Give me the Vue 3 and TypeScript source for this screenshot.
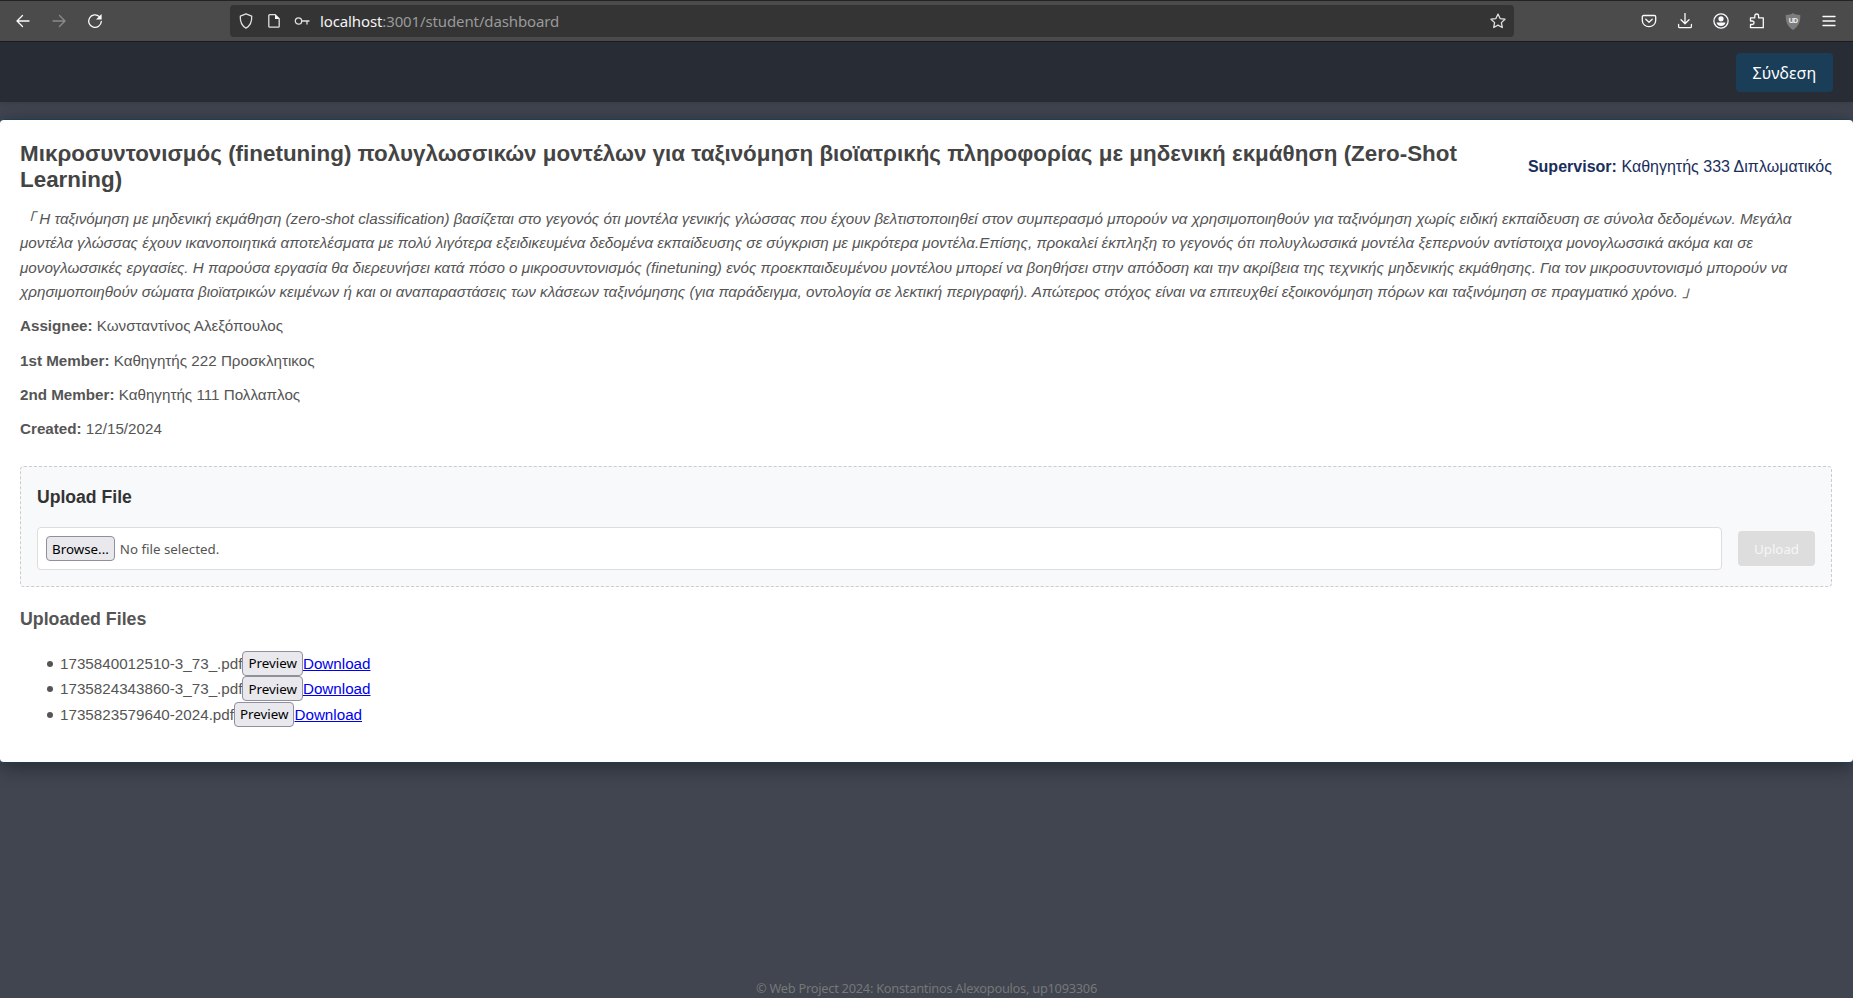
<script setup lang="ts">
interface Meta {
  label: string
  value: string
}

const meta: Meta[] = [
  { label: 'Assignee:', value: 'Κωνσταντίνος Αλεξόπουλος' },
  { label: '1st Member:', value: 'Καθηγητής 222 Προσκλητικος' },
  { label: '2nd Member:', value: 'Καθηγητής 111 Πολλαπλος' },
  { label: 'Created:', value: '12/15/2024' },
]

const files: string[] = [
  '1735840012510-3_73_.pdf',
  '1735824343860-3_73_.pdf',
  '1735823579640-2024.pdf',
]

const description: string[] = [
  'Η ταξινόμηση με μηδενική εκμάθηση (zero-shot classification) βασίζεται στο γεγονός ότι μοντέλα γενικής γλώσσας που έχουν βελτιστοποιηθεί στον συμπερασμό μπορούν να χρησιμοποιηθούν για ταξινόμηση χωρίς ειδική εκπαίδευση σε σύνολα δεδομένων. Μεγάλα',
  'μοντέλα γλώσσας έχουν ικανοποιητικά αποτελέσματα με πολύ λιγότερα εξειδικευμένα δεδομένα εκπαίδευσης σε σύγκριση με μικρότερα μοντέλα.Επίσης, προκαλεί έκπληξη το γεγονός ότι πολυγλωσσικά μοντέλα ξεπερνούν αντίστοιχα μονογλωσσικά ακόμα και σε',
  'μονογλωσσικές εργασίες. Η παρούσα εργασία θα διερευνήσει κατά πόσο ο μικροσυντονισμός (finetuning) ενός προεκπαιδευμένου μοντέλου μπορεί να βοηθήσει στην απόδοση και την ακρίβεια της τεχνικής μηδενικής εκμάθησης. Για τον μικροσυντονισμό μπορούν να',
  'χρησιμοποιηθούν σώματα βιοϊατρικών κειμένων ή και οι αναπαραστάσεις των κλάσεων ταξινόμησης (για παράδειγμα, οντολογία σε λεκτική περιγραφή). Απώτερος στόχος είναι να επιτευχθεί εξοικονόμηση πόρων και ταξινόμηση σε πραγματικό χρόνο.',
]
</script>

<template>
  <div class="window">
    <div class="toolbar">
      <div class="nav-icons">
        <svg class="icon" viewBox="0 0 16 16"><path d="M14 8H2.500M7.500 2.500L2 8l5.500 5.500" /></svg>
        <svg class="icon dim" viewBox="0 0 16 16"><path d="M2 8h11.500M8.500 2.500L14 8l-5.500 5.500" /></svg>
        <svg class="icon" viewBox="0 0 16 16">
          <path d="M14.300 8.500a6.300 6.300 0 1 1-2-5L13.500 5" />
          <path class="solid" d="M14.600 .9v5.600H9z" />
        </svg>
      </div>
      <div class="address">
        <svg class="icon soft" viewBox="0 0 16 16"><path d="M8 .9l5.700 2.300c.3 5-1.200 9.300-5.700 11.900C3.500 12.500 2 8.200 2.300 3.200z" /></svg>
        <svg class="icon soft" viewBox="0 0 16 16">
          <path d="M3.800 1.700h5.400l4 4v7.500a1 1 0 0 1-1 1H3.800a1 1 0 0 1-1-1V2.700a1 1 0 0 1 1-1z" />
          <path class="solid" d="M9 1.500v4.500h4.500z" />
        </svg>
        <svg class="icon soft" viewBox="0 0 16 16">
          <circle cx="4.500" cy="8" r="3.200" />
          <path d="M7.700 8H15M13 8v3" />
        </svg>
        <span class="url"><b>localhost</b>:3001/student/dashboard</span>
        <svg class="icon star soft" viewBox="0 0 16 16"><path d="M8 1.100l2.100 4.500 4.900.6-3.600 3.400.9 4.900L8 12.100l-4.300 2.400.9-4.900L1 6.200l4.900-.6z" /></svg>
      </div>
      <div class="tools">
        <svg class="icon" viewBox="0 0 16 16">
          <path d="M2.600 2.500h10.800c.8 0 1.300.5 1.300 1.300V7.500a6.700 6.200 0 0 1-13.400 0V3.800c0-.8.500-1.300 1.300-1.300z" />
          <path d="M4.800 6.300L8 9.300l3.200-3" />
        </svg>
        <svg class="icon" viewBox="0 0 16 16"><path d="M8 .5v10M4 6.800l4 4 4-4M1.600 11.500v2c0 .7.500 1.200 1.200 1.200h10.400c.7 0 1.200-.5 1.200-1.200v-2" /></svg>
        <svg class="icon" viewBox="0 0 16 16">
          <circle cx="8" cy="8" r="7.100" />
          <circle class="solid" cx="8" cy="5.800" r="2.600" />
          <path class="solid" d="M3.500 9.500h9c-.5 2.500-2.500 3.500-4.500 3.500s-4-1-4.500-3.500z" />
        </svg>
        <svg class="icon" viewBox="0 0 16 16"><path d="M1.500 14.700V11.500h1.800a1.700 1.700 0 0 0 0-3.500H1.500V4.800h4.300V2.900a1.900 1.900 0 0 1 3.800 0v1.900h4.700v9.900z" /></svg>
        <span class="shield">
          <svg viewBox="0 0 16 18"><path d="M8 0c2 1.500 4 2 7.700 2.200.3 6.500-1.500 12-7.700 15.800C1.800 14.200 0 8.700.3 2.200 4 2 6 1.500 8 0z" /></svg>
          <span>UD</span>
        </span>
        <svg class="icon" viewBox="0 0 16 16"><path d="M2 3.500h12M2 8h12M2 12.500h12" /></svg>
      </div>
    </div>

    <header class="header">
      <button class="login">Σύνδεση</button>
    </header>

    <main class="card">
      <div class="card-head">
        <h2>Μικροσυντονισμός (finetuning) πολυγλωσσικών μοντέλων για ταξινόμηση βιοϊατρικής πληροφορίας με μηδενική εκμάθηση (Zero-Shot<br>Learning)</h2>
        <p class="supervisor"><strong>Supervisor:</strong> Καθηγητής 333 Διπλωματικός</p>
      </div>
      <p class="description">
        <span v-for="(line, i) in description" :key="i" class="line"><span v-if="i === 0" class="quote open">「</span>{{ line }}<span v-if="i === 3" class="quote"> 」</span></span>
      </p>
      <p v-for="m in meta" :key="m.label" class="meta"><strong>{{ m.label }}</strong> {{ m.value }}</p>

      <section class="upload">
        <h3>Upload File</h3>
        <div class="upload-row">
          <div class="file-input">
            <button class="native">Browse...</button>
            <span class="file-status">No file selected.</span>
          </div>
          <button class="submit" disabled>Upload</button>
        </div>
      </section>

      <h3 class="files-title">Uploaded Files</h3>
      <ul class="files">
        <li v-for="f in files" :key="f"><span>{{ f }}</span><button class="native">Preview</button><a href="#">Download</a></li>
      </ul>
    </main>

    <footer class="footer"><span>© Web Project 2024: Konstantinos Alexopoulos, up1093306</span></footer>
  </div>
</template>

<style>
html,
body {
  overflow: hidden;
}
</style>

<style scoped>
.window {
  display: flex;
  flex-direction: column;
  height: 998px;
  overflow: hidden;
  background: #404550;
  font-family: "Liberation Sans", Arial, sans-serif;
  color: #555;
}
h2,
h3,
p,
ul {
  margin: 0;
}
.toolbar {
  box-sizing: border-box;
  flex: none;
  height: 42px;
  display: flex;
  align-items: center;
  border-top: 1px solid #232323;
  border-bottom: 1px solid #1c1c1e;
  background: #4b4b4b;
}
.icon {
  flex: none;
  width: 16px;
  height: 16px;
  fill: none;
  stroke: #fbfbfe;
  stroke-width: 1.3;
  stroke-linecap: round;
  stroke-linejoin: round;
}
.icon .solid {
  fill: #fbfbfe;
  stroke: none;
}
.soft {
  stroke: #e0e0e0;
}
.dim {
  stroke: #8c8c8c;
}
.nav-icons {
  box-sizing: border-box;
  display: flex;
  gap: 20px;
  width: 200px;
  padding-left: 15px;
}
.address {
  box-sizing: border-box;
  display: flex;
  align-items: center;
  gap: 12px;
  width: 1284px;
  height: 32px;
  margin-left: 30px;
  padding: 0 8px;
  border-radius: 4px;
  background: #343434;
}
.url {
  margin-left: -2px;
  padding-bottom: 1px;
  font: 15px/20px "Noto Sans", sans-serif;
  letter-spacing: -0.12px;
  color: #9a9a9a;
}
.url b {
  font-weight: 400;
  color: #f4f4f6;
}
.star {
  margin-left: auto;
}
.tools {
  display: flex;
  align-items: center;
  gap: 20px;
  margin-left: 127px;
}
.shield {
  position: relative;
  width: 16px;
  height: 17px;
}
.shield svg {
  display: block;
  width: 16px;
  height: 17px;
  fill: #7d7d7d;
}
.shield span {
  position: absolute;
  inset: 0;
  font: 700 7px/15px "Liberation Sans", sans-serif;
  letter-spacing: -0.8px;
  text-align: center;
  color: #f0f0f0;
}
.header {
  box-sizing: border-box;
  flex: none;
  display: flex;
  justify-content: flex-end;
  height: 60px;
  padding: 11px 20px 0 0;
  background: #282c34;
  box-shadow: 0 2px 5px rgba(0, 0, 0, 0.1);
}
.login {
  width: 97px;
  height: 39px;
  padding: 1px 0 0;
  border: 0;
  border-radius: 4px;
  background: #1a3e58;
  font: 16px/38px "Noto Sans", sans-serif;
  letter-spacing: 0.15px;
  color: #fff;
}
.card {
  box-sizing: border-box;
  flex: none;
  height: 644px;
  margin-top: 17px;
  padding: 21px 21px 0 20px;
  border: solid #1a3e58;
  border-width: 1px 0;
  border-radius: 4px;
  background: #fff;
  box-shadow: 0 4px 20px rgba(0, 0, 0, 0.4);
}
.card-head {
  display: flex;
  justify-content: space-between;
  align-items: center;
  height: 52px;
}
h2 {
  font-size: 22.4px;
  line-height: 26px;
  letter-spacing: 0.01px;
  color: #444;
  white-space: nowrap;
}
.supervisor {
  font-size: 16px;
  line-height: 20px;
  letter-spacing: 0.01px;
  color: #1a2e5c;
}
.description {
  margin-top: 14px;
  font-size: 15.2px;
  line-height: 24.32px;
  letter-spacing: 0.007px;
  font-style: italic;
}
.line {
  display: block;
  white-space: nowrap;
}
.quote {
  font-family: "Liberation Sans", "Noto Sans CJK JP", sans-serif;
  line-height: 1;
}
.open {
  margin-right: 4px;
}
.meta {
  margin-top: 10px;
  font-size: 15.2px;
  line-height: 24.32px;
}
.upload {
  box-sizing: border-box;
  height: 121px;
  margin-top: 24px;
  padding: 16px;
  border: 1px dashed #ccc;
  border-radius: 4px;
  background: #f8f9fb;
}
.upload h3 {
  font-size: 17.6px;
  line-height: 28px;
  color: #333;
}
.upload-row {
  display: flex;
  align-items: center;
  gap: 16px;
  margin-top: 16px;
}
.file-input {
  box-sizing: border-box;
  flex: 1;
  display: flex;
  align-items: center;
  gap: 5px;
  height: 43px;
  padding: 0 8px;
  border: 1px solid #ddd;
  border-radius: 4px;
  background: #fff;
  font: 13.333px/20px "Noto Sans", sans-serif;
}
.file-status {
  padding-top: 2px;
}
.native {
  box-sizing: border-box;
  height: 25px;
  margin: 0;
  padding: 1px 5px 0;
  border: 1px solid #8f8f9d;
  border-radius: 4px;
  background: #e9e9ed;
  font: 13.333px/20px "Noto Sans", sans-serif;
  color: #000;
}
.submit {
  width: 77px;
  height: 35px;
  padding: 1px 0 0;
  border: 0;
  border-radius: 4px;
  background: #ddd;
  font: 13.333px/20px "Noto Sans", sans-serif;
  color: #f6f6f6;
}
.files-title {
  margin-top: 18px;
  font-size: 17.784px;
  line-height: 28px;
}
.files {
  margin-top: 18px;
  padding-left: 40px;
  list-style: none;
  font-size: 15.2px;
}
.files li {
  display: flex;
  align-items: center;
  height: 25.500px;
  line-height: 25px;
}
.files li::before {
  content: "";
  width: 6px;
  height: 6px;
  margin: 1px 7px 0 -13px;
  border-radius: 50%;
  background: #555;
}
.files .native {
  padding: 0 5px;
}
.files a {
  color: #0000ee;
}
.footer {
  margin-top: auto;
  height: 20px;
  text-align: center;
  font: 12.800px/20px "Noto Sans", sans-serif;
  letter-spacing: -0.25px;
  color: #777;
}
</style>
